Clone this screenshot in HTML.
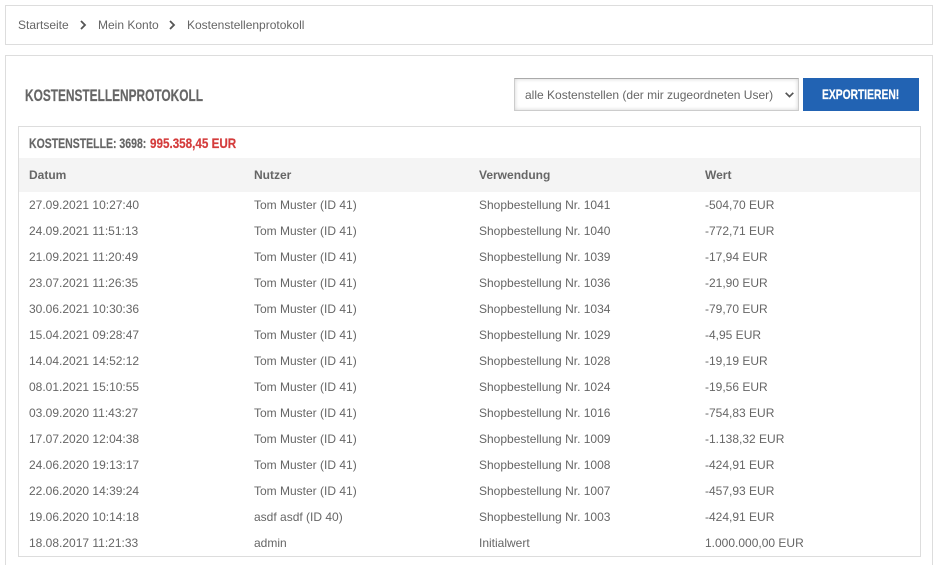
<!DOCTYPE html>
<html lang="de">
<head>
<meta charset="utf-8">
<title>Kostenstellenprotokoll</title>
<style>
html,body{margin:0;padding:0;background:#fff;width:942px;height:565px;overflow:hidden;}
body{position:relative;font-family:"Liberation Sans",Arial,sans-serif;font-size:12px;color:#666;}
.a{position:absolute;white-space:nowrap;}
.crumbs{left:5px;top:5px;width:926px;height:38px;border:1px solid #ddd;}
.crumbs span{position:absolute;top:12px;line-height:14px;color:#666;}
.crumbs svg{position:absolute;top:14px;}
.panel{left:5px;top:55px;width:926px;height:509px;border:1px solid #ddd;border-bottom:0;}
h1{position:absolute;left:25px;top:86px;margin:0;font-family:"Liberation Sans",sans-serif;font-size:16.5px;line-height:20px;font-weight:700;color:#666;white-space:nowrap;transform:scaleX(.72);transform-origin:0 50%;-webkit-text-stroke:.2px #666;}
.sel{left:514px;top:78px;width:285px;height:33px;box-sizing:border-box;border:1px solid #ccc;border-top-color:#aaa;box-shadow:inset 0 0 4px rgba(0,0,0,.18);background:#fff;}
.sel span{position:absolute;left:10px;top:9px;line-height:14px;color:#666;}
.sel svg{position:absolute;left:270px;top:13px;}
.btn{left:803px;top:78px;width:116px;height:33px;background:#2263b3;}
.btn span{position:absolute;left:19px;top:0;color:#fff;font-weight:700;font-size:14px;line-height:33px;transform:scaleX(.735);transform-origin:0 50%;-webkit-text-stroke:.25px #fff;}
.box{left:18px;top:126px;width:901px;height:429px;border:1px solid #ddd;}
.st{top:135px;font-weight:700;font-size:14px;line-height:16px;color:#666;transform-origin:0 50%;-webkit-text-stroke:.2px currentColor;}
.st1{left:29px;transform:scaleX(.75);}
.st2{left:150px;color:#d43c3c;transform:scaleX(.833);}
.head{left:19px;top:158px;width:901px;height:34px;background:#f4f4f4;}
.th{top:168px;line-height:14px;font-weight:700;color:#666;}
.c1{left:29px}.c2{left:254px}.c3{left:479px}.c4{left:705px}
table{position:absolute;left:19px;top:192px;border-collapse:collapse;table-layout:fixed;width:901px;}
td{padding:0 0 0 10px;height:26px;line-height:26px;white-space:nowrap;color:#666;}
td:last-child{padding-left:11px;}
col.w{width:225px}
</style>
</head>
<body>
<div class="a crumbs">
<span style="left:12px">Startseite</span>
<svg style="left:73px" width="9" height="10" viewBox="0 0 9 10"><path d="M2 1l4 4-4 4" fill="none" stroke="#555" stroke-width="1.8"/></svg>
<span style="left:92px">Mein Konto</span>
<svg style="left:162px" width="9" height="10" viewBox="0 0 9 10"><path d="M2 1l4 4-4 4" fill="none" stroke="#555" stroke-width="1.8"/></svg>
<span style="left:181px">Kostenstellenprotokoll</span>
</div>
<div class="a panel"></div>
<h1>KOSTENSTELLENPROTOKOLL</h1>
<div class="a sel"><span>alle Kostenstellen (der mir zugeordneten User)</span><svg width="9" height="6" viewBox="0 0 9 6"><path d="M.7 .8l3.8 3.8 3.8-3.8" fill="none" stroke="#555" stroke-width="1.7"/></svg></div>
<div class="a btn"><span>EXPORTIEREN!</span></div>
<div class="a box"></div>
<div class="a st st1">KOSTENSTELLE: 3698:</div>
<div class="a st st2">995.358,45 EUR</div>
<div class="a head"></div>
<div class="a th c1">Datum</div>
<div class="a th c2">Nutzer</div>
<div class="a th c3">Verwendung</div>
<div class="a th c4">Wert</div>
<table>
<colgroup><col class="w"><col class="w"><col class="w"><col></colgroup>
<tr><td>27.09.2021 10:27:40</td><td>Tom Muster (ID 41)</td><td>Shopbestellung Nr. 1041</td><td>-504,70 EUR</td></tr>
<tr><td>24.09.2021 11:51:13</td><td>Tom Muster (ID 41)</td><td>Shopbestellung Nr. 1040</td><td>-772,71 EUR</td></tr>
<tr><td>21.09.2021 11:20:49</td><td>Tom Muster (ID 41)</td><td>Shopbestellung Nr. 1039</td><td>-17,94 EUR</td></tr>
<tr><td>23.07.2021 11:26:35</td><td>Tom Muster (ID 41)</td><td>Shopbestellung Nr. 1036</td><td>-21,90 EUR</td></tr>
<tr><td>30.06.2021 10:30:36</td><td>Tom Muster (ID 41)</td><td>Shopbestellung Nr. 1034</td><td>-79,70 EUR</td></tr>
<tr><td>15.04.2021 09:28:47</td><td>Tom Muster (ID 41)</td><td>Shopbestellung Nr. 1029</td><td>-4,95 EUR</td></tr>
<tr><td>14.04.2021 14:52:12</td><td>Tom Muster (ID 41)</td><td>Shopbestellung Nr. 1028</td><td>-19,19 EUR</td></tr>
<tr><td>08.01.2021 15:10:55</td><td>Tom Muster (ID 41)</td><td>Shopbestellung Nr. 1024</td><td>-19,56 EUR</td></tr>
<tr><td>03.09.2020 11:43:27</td><td>Tom Muster (ID 41)</td><td>Shopbestellung Nr. 1016</td><td>-754,83 EUR</td></tr>
<tr><td>17.07.2020 12:04:38</td><td>Tom Muster (ID 41)</td><td>Shopbestellung Nr. 1009</td><td>-1.138,32 EUR</td></tr>
<tr><td>24.06.2020 19:13:17</td><td>Tom Muster (ID 41)</td><td>Shopbestellung Nr. 1008</td><td>-424,91 EUR</td></tr>
<tr><td>22.06.2020 14:39:24</td><td>Tom Muster (ID 41)</td><td>Shopbestellung Nr. 1007</td><td>-457,93 EUR</td></tr>
<tr><td>19.06.2020 10:14:18</td><td>asdf asdf (ID 40)</td><td>Shopbestellung Nr. 1003</td><td>-424,91 EUR</td></tr>
<tr><td>18.08.2017 11:21:33</td><td>admin</td><td>Initialwert</td><td>1.000.000,00 EUR</td></tr>
</table>
</body>
</html>
